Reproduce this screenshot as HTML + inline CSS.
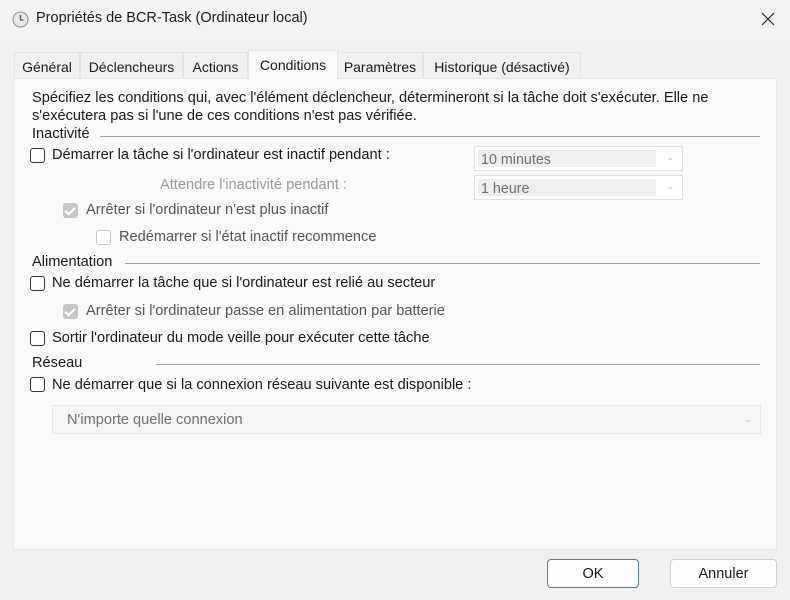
<!DOCTYPE html>
<html><head><meta charset="utf-8"><style>
*{margin:0;padding:0;box-sizing:border-box}
body{width:790px;height:600px;background:#f0f0f0;font-family:"Liberation Sans",sans-serif;font-size:14.6px;color:#1a1a1a;position:relative;overflow:hidden}
.a{position:absolute;white-space:nowrap}
.title{left:0;top:0;width:790px;height:40px;background:#f3f3f3}
.tab{position:absolute;top:52px;height:27px;background:#f0f0f0;border:1px solid #e3e3e3;border-bottom:none;padding:6px 0 0 0;text-align:center;font-size:14px}
.panel{left:13px;top:78px;width:764px;height:472px;background:#f9f9f9;border:1px solid #e5e5e5}
.cb{position:absolute;width:15px;height:15px;border:1px solid #333;border-radius:3px;background:#fff}
.cbd{border-color:#c8c8c8;background:#fff}
.cbc{border:none;background:#c6c6c6}
.cbc::after{content:"";position:absolute;left:4px;top:2px;width:4px;height:8px;border:solid #fff;border-width:0 2px 2px 0;transform:rotate(45deg)}
.line{position:absolute;height:1px;background:#a0a0a0}
.combo{position:absolute;border:1px solid #e0e0e0;background:#fff}
.combo .in{position:absolute;left:3px;top:3px;bottom:3px;right:26px;background:#efefef;color:#6e6e6e;padding:2px 0 0 3px;font-size:14.3px}
.combo .ar{position:absolute;right:8px;top:5px;color:#bbb;font-size:9px}
.g{color:#9a9a9a}
.btn{position:absolute;height:29px;border:1px solid #d0d0d0;border-radius:4px;background:#fdfdfd;text-align:center;padding-top:6px;font-size:14.5px}
</style></head><body>
<div class="a title"></div>
<svg class="a" style="left:12px;top:11px" width="17" height="17" viewBox="0 0 17 17"><circle cx="8.5" cy="8.5" r="7.5" fill="#e8e8e8" stroke="#8a8a8a"/><path d="M8.5 4v5h3" stroke="#555" stroke-width="1.3" fill="none"/></svg>
<div class="a" style="left:36px;top:10px;font-size:14.5px">Propriétés de BCR-Task (Ordinateur local)</div>
<svg class="a" style="left:761px;top:12px" width="14" height="14"><path d="M1 1L13 13M13 1L1 13" stroke="#222" stroke-width="1.2"/></svg>

<div class="tab" style="left:14px;width:66px">Général</div>
<div class="tab" style="left:80px;width:103px">Déclencheurs</div>
<div class="tab" style="left:183px;width:65px">Actions</div>
<div class="tab" style="left:337px;width:86px">Paramètres</div>
<div class="tab" style="left:423px;width:158px">Historique (désactivé)</div>
<div class="a panel"></div>
<div class="tab" style="left:248px;top:50px;height:30px;width:90px;background:#f9f9f9;border-color:#e5e5e5;padding-top:6px">Conditions</div>

<div class="a" style="left:32px;top:90px">Spécifiez les conditions qui, avec l'élément déclencheur, détermineront si la tâche doit s'exécuter. Elle ne</div>
<div class="a" style="left:32px;top:108px">s'exécutera pas si l'une de ces conditions n'est pas vérifiée.</div>

<div class="a" style="left:32px;top:126px">Inactivité</div>
<div class="line" style="left:100px;top:136px;width:660px"></div>
<div class="cb" style="left:30px;top:148px"></div>
<div class="a" style="left:52px;top:147px">Démarrer la tâche si l'ordinateur est inactif pendant :</div>
<div class="combo" style="left:474px;top:146px;width:209px;height:25px"><div class="in">10 minutes</div><div class="ar">⌄</div></div>
<div class="a g" style="left:160px;top:177px">Attendre l'inactivité pendant :</div>
<div class="combo" style="left:474px;top:175px;width:209px;height:25px"><div class="in">1 heure</div><div class="ar">⌄</div></div>
<div class="cb cbc" style="left:63px;top:203px"></div>
<div class="a" style="left:86px;top:202px;color:#555">Arrêter si l'ordinateur n'est plus inactif</div>
<div class="cb cbd" style="left:96px;top:230px"></div>
<div class="a" style="left:119px;top:229px;color:#555">Redémarrer si l'état inactif recommence</div>

<div class="a" style="left:32px;top:254px">Alimentation</div>
<div class="line" style="left:125px;top:263px;width:635px"></div>
<div class="cb" style="left:30px;top:276px"></div>
<div class="a" style="left:52px;top:275px">Ne démarrer la tâche que si l'ordinateur est relié au secteur</div>
<div class="cb cbc" style="left:63px;top:304px"></div>
<div class="a" style="left:86px;top:303px;color:#555">Arrêter si l'ordinateur passe en alimentation par batterie</div>
<div class="cb" style="left:30px;top:331px"></div>
<div class="a" style="left:52px;top:330px">Sortir l'ordinateur du mode veille pour exécuter cette tâche</div>

<div class="a" style="left:32px;top:355px">Réseau</div>
<div class="line" style="left:156px;top:364px;width:604px"></div>
<div class="cb" style="left:30px;top:377px"></div>
<div class="a" style="left:52px;top:377px">Ne démarrer que si la connexion réseau suivante est disponible :</div>
<div class="combo" style="left:52px;top:405px;width:709px;height:29px;background:#f5f5f5;border-color:#e6e6e6"><div class="a" style="left:14px;top:6px;color:#707070">N'importe quelle connexion</div><div class="ar" style="top:8px">⌄</div></div>

<div class="btn" style="left:547px;top:559px;width:92px;border:1.5px solid #3b82c4">OK</div>
<div class="btn" style="left:670px;top:559px;width:107px">Annuler</div>
</body></html>
